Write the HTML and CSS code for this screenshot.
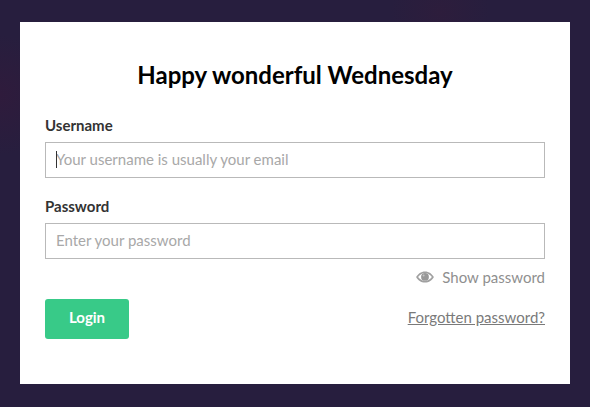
FILE: index.html
```html
<!DOCTYPE html>
<html>
<head lang="en">
    <meta charset="UTF-8">
    <title>Login</title>
    <link rel="stylesheet" href="styles.css">
</head>
<body>
<div class="card">
    <h1 class="title">Happy wonderful Wednesday</h1>
    <form class="form">
        <label class="label" for="username">Username</label>
        <div class="field">
            <input id="username" class="input" type="text" placeholder="Your username is usually your email">
            <span class="caret"></span>
        </div>
        <label class="label label-second" for="password">Password</label>
        <div class="field">
            <input id="password" class="input" type="password" placeholder="Enter your password">
        </div>
        <div class="show">
            <svg class="eye" width="18" height="12" viewBox="0 0 18 12">
                <path fill="#a0a0a0" fill-rule="evenodd" d="M9 .4C5 .4 1.900 2.800.1 6c1.800 3.200 4.900 5.600 8.900 5.600s7.100-2.400 8.900-5.600C16.100 2.800 13 .4 9 .4zM9 2C11.600 2 14.400 3.700 15.900 6 14.400 8.300 11.600 10 9 10S3.600 8.300 2.100 6C3.600 3.700 6.400 2 9 2z"/>
                <circle cx="9" cy="5.900" r="3.900" fill="#989898"/>
                <circle cx="7.600" cy="4.600" r="1" fill="#c4c4c4"/>
            </svg>
            <span>Show password</span>
        </div>
        <div class="actions">
            <button class="login" type="button">Login</button>
            <a class="forgot" href="#">Forgotten password?</a>
        </div>
    </form>
</div>
</body>
</html>
```

FILE: styles.css
```css
*{
    margin: 0;
    padding: 0;
    box-sizing: border-box;
}
html,body{
    height: 100%;
}
body{
    background:
        radial-gradient(circle at 0 95px, #2f1b3c 0, rgba(47,27,60,0) 60px),
        radial-gradient(circle at 440px 12px, #2d1d3c 0, rgba(45,29,60,0) 50px),
        #271e3e;
    font-family: Lato, "Liberation Sans", sans-serif;
    padding: 22px 20px 23px;
    overflow: hidden;
}
.card{
    width: 550px;
    height: 362px;
    background: #fff;
    padding: 36px 25px 0;
}
.title{
    font-size: 24px;
    line-height: 34px;
    font-weight: 700;
    color: #000;
    text-align: center;
}
.form{
    display: flex;
    flex-direction: column;
    margin-top: 23px;
}
.label{
    font-size: 15px;
    line-height: 20px;
    font-weight: 700;
    color: #333;
    margin-bottom: 7px;
}
.label-second{
    margin-top: 18px;
}
.field{
    position: relative;
}
.input{
    display: block;
    width: 100%;
    height: 36px;
    border: 1px solid #b9b9b9;
    padding: 0 10px 3px;
    font-family: inherit;
    font-size: 15px;
    color: #333;
    outline: none;
}
.input::placeholder{
    color: #a8a8a8;
    opacity: 1;
}
.caret{
    position: absolute;
    left: 11px;
    top: 9px;
    width: 1px;
    height: 17px;
    background: #333;
}
.show{
    display: flex;
    justify-content: flex-end;
    align-items: center;
    gap: 8px;
    margin-top: 8px;
    font-size: 15px;
    line-height: 20px;
    color: #8f8f8f;
}
.actions{
    display: flex;
    justify-content: space-between;
    align-items: center;
    margin-top: 12px;
}
.login{
    width: 84px;
    height: 40px;
    border: none;
    border-radius: 3px;
    padding-bottom: 4px;
    background: #38ca88;
    color: #fff;
    font-family: inherit;
    font-size: 15px;
    font-weight: 700;
}
.forgot{
    font-size: 15px;
    color: #7a7a7a;
    text-decoration: underline;
    margin-bottom: 4px;
}
```
